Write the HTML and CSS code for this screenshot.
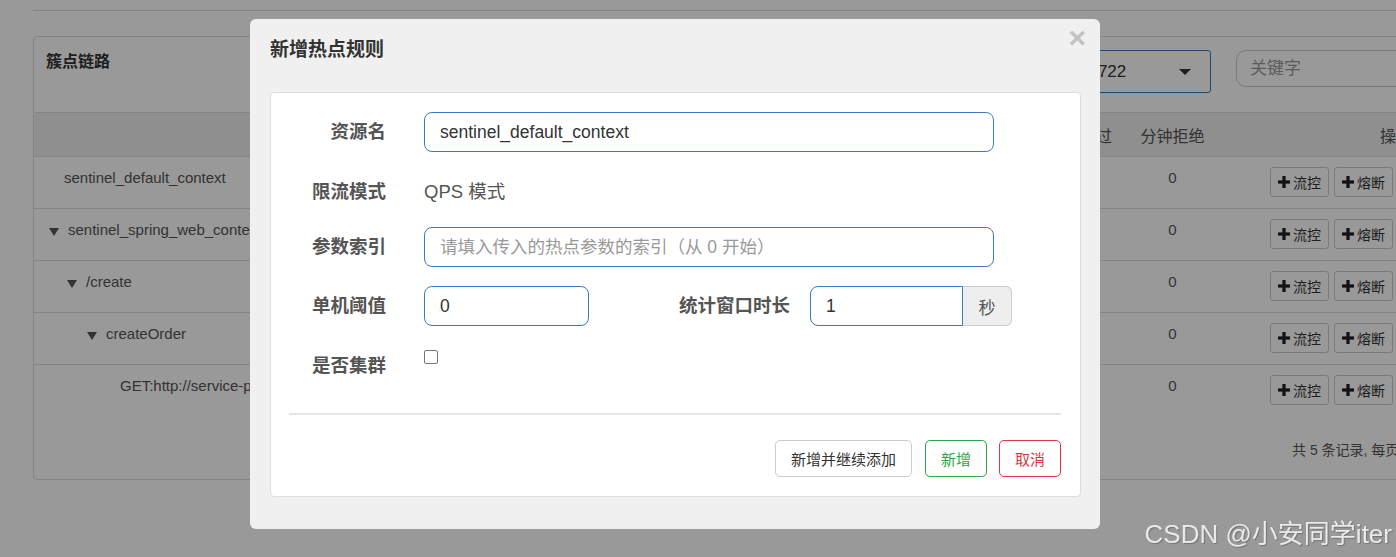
FILE: index.html
```html
<!DOCTYPE html>
<html lang="zh-CN">
<head>
    <meta charset="UTF-8">
    <meta name="viewport" content="width=device-width, initial-scale=1.0">
    <title>簇点链路 - Sentinel 控制台</title>
    <link rel="stylesheet" href="styles.css">
</head>
<body>
    <div class="page">
        <div class="topbar"></div>
        <div class="panel">
            <div class="panel-head">
                <div class="panel-title">簇点链路</div>
                <div class="app-select">
                    <span>192.168.2.105:8722</span>
                    <span class="caret"></span>
                </div>
                <div class="keyword">关键字</div>
            </div>
            <div class="thead">
                <div class="c-name">资源名</div>
                <div class="c-pass">分钟通过</div>
                <div class="c-rej">分钟拒绝</div>
                <div class="c-ops head-ops">操作</div>
            </div>

            <div class="trow">
                <div class="c-name lv0">sentinel_default_context</div>
                <div class="c-pass">0</div>
                <div class="c-rej">0</div>
                <div class="c-ops">
                    <button class="obtn"><svg class="plus" viewBox="0 0 11 11"><rect x="4" y="0" width="3" height="11"/><rect x="0" y="4" width="11" height="3"/></svg>流控</button>
                    <button class="obtn"><svg class="plus" viewBox="0 0 11 11"><rect x="4" y="0" width="3" height="11"/><rect x="0" y="4" width="11" height="3"/></svg>熔断</button>
                </div>
            </div>
            <div class="trow">
                <div class="c-name lv1"><span class="tri"></span>sentinel_spring_web_context</div>
                <div class="c-pass">0</div>
                <div class="c-rej">0</div>
                <div class="c-ops">
                    <button class="obtn"><svg class="plus" viewBox="0 0 11 11"><rect x="4" y="0" width="3" height="11"/><rect x="0" y="4" width="11" height="3"/></svg>流控</button>
                    <button class="obtn"><svg class="plus" viewBox="0 0 11 11"><rect x="4" y="0" width="3" height="11"/><rect x="0" y="4" width="11" height="3"/></svg>熔断</button>
                </div>
            </div>
            <div class="trow">
                <div class="c-name lv2"><span class="tri"></span>/create</div>
                <div class="c-pass">0</div>
                <div class="c-rej">0</div>
                <div class="c-ops">
                    <button class="obtn"><svg class="plus" viewBox="0 0 11 11"><rect x="4" y="0" width="3" height="11"/><rect x="0" y="4" width="11" height="3"/></svg>流控</button>
                    <button class="obtn"><svg class="plus" viewBox="0 0 11 11"><rect x="4" y="0" width="3" height="11"/><rect x="0" y="4" width="11" height="3"/></svg>熔断</button>
                </div>
            </div>
            <div class="trow">
                <div class="c-name lv3"><span class="tri"></span>createOrder</div>
                <div class="c-pass">0</div>
                <div class="c-rej">0</div>
                <div class="c-ops">
                    <button class="obtn"><svg class="plus" viewBox="0 0 11 11"><rect x="4" y="0" width="3" height="11"/><rect x="0" y="4" width="11" height="3"/></svg>流控</button>
                    <button class="obtn"><svg class="plus" viewBox="0 0 11 11"><rect x="4" y="0" width="3" height="11"/><rect x="0" y="4" width="11" height="3"/></svg>熔断</button>
                </div>
            </div>
            <div class="trow last">
                <div class="c-name lv4">GET:http://service-product/product/1</div>
                <div class="c-pass">0</div>
                <div class="c-rej">0</div>
                <div class="c-ops">
                    <button class="obtn"><svg class="plus" viewBox="0 0 11 11"><rect x="4" y="0" width="3" height="11"/><rect x="0" y="4" width="11" height="3"/></svg>流控</button>
                    <button class="obtn"><svg class="plus" viewBox="0 0 11 11"><rect x="4" y="0" width="3" height="11"/><rect x="0" y="4" width="11" height="3"/></svg>熔断</button>
                </div>
            </div>
            <div class="pager">共 5 条记录, 每页 16 条记录</div>
        </div>
    </div>

    <div class="backdrop"></div>

    <div class="modal">
        <div class="modal-title">新增热点规则</div>
        <span class="close">×</span>
        <div class="card">
            <div class="frow r1">
                <label class="lbl">资源名</label>
                <input class="inp wide" type="text" value="sentinel_default_context">
            </div>
            <div class="frow r2">
                <label class="lbl">限流模式</label>
                <span class="plain">QPS 模式</span>
            </div>
            <div class="frow r3">
                <label class="lbl">参数索引</label>
                <input class="inp wide" type="text" placeholder="请填入传入的热点参数的索引（从 0 开始）">
            </div>
            <div class="frow r4">
                <label class="lbl">单机阈值</label>
                <input class="inp small" type="text" value="0">
                <label class="lbl lbl2">统计窗口时长</label>
                <div class="igroup">
                    <input class="inp grp" type="text" value="1">
                    <span class="addon">秒</span>
                </div>
            </div>
            <div class="frow r5">
                <label class="lbl">是否集群</label>
                <input class="chk" type="checkbox">
            </div>
            <div class="sep"></div>
            <div class="actions">
                <button class="btn">新增并继续添加</button>
                <button class="btn btn-ok">新增</button>
                <button class="btn btn-cancel">取消</button>
            </div>
        </div>
    </div>

    <div class="watermark">CSDN @小安同学iter</div>
</body>
</html>
```

FILE: styles.css
```css
* {
    margin: 0;
    padding: 0;
    box-sizing: border-box;
}

body {
    width: 1396px;
    height: 557px;
    overflow: hidden;
    background: #fff;
    color: #333;
    font-family: "Liberation Sans", "Noto Sans CJK SC", sans-serif;
}

/* page under the modal */
.page {
    padding: 10px 0 0 33px;
}

.topbar {
    border-top: 1px solid #ddd;
    margin-bottom: 25px;
}

.panel {
    width: 1500px;
    border: 1px solid #ddd;
    border-radius: 4px;
}

.panel-head {
    height: 76px;
    border-bottom: 1px solid #ddd;
    display: flex;
    align-items: flex-start;
    padding: 13px 0 0 12px;
}

.panel-title {
    width: 916px;
    font-size: 16px;
    font-weight: bold;
    line-height: 24px;
    color: #333;
}

.app-select {
    width: 249px;
    height: 43px;
    border: 1px solid #337ab7;
    border-radius: 3px;
    display: flex;
    align-items: center;
    justify-content: space-between;
    padding: 0 19px 0 12px;
    font-size: 17px;
    color: #333;
}

.caret {
    width: 0;
    height: 0;
    border-left: 6px solid transparent;
    border-right: 6px solid transparent;
    border-top: 6px solid #333;
}

.keyword {
    margin-left: 25px;
    width: 220px;
    height: 37px;
    border: 1px solid #ccc;
    border-radius: 10px;
    padding-left: 13px;
    font-size: 17px;
    line-height: 35px;
    color: #999;
}

.thead {
    display: flex;
    align-items: center;
    height: 44px;
    background: #eee;
    border-bottom: 1px solid #ddd;
    font-size: 16px;
    color: #555;
}

.trow {
    display: flex;
    align-items: flex-start;
    height: 52px;
    border-bottom: 1px solid #ddd;
    padding-top: 11px;
    font-size: 15px;
    line-height: 20px;
    color: #555;
}

.trow.last {
    border-bottom: none;
}

.c-name {
    width: 1001px;
    white-space: nowrap;
    overflow: hidden;
}

.thead .c-name {
    text-align: center;
}

.c-pass {
    width: 90px;
    text-align: center;
}

.c-rej {
    width: 95px;
    text-align: center;
}

.c-ops {
    display: flex;
    gap: 5px;
    padding-left: 50px;
    margin-top: -1px;
}

.head-ops {
    padding-left: 160px;
    margin-top: 0;
}

.lv0 { padding-left: 30px; }
.lv1 { padding-left: 15px; }
.lv2 { padding-left: 33px; }
.lv3 { padding-left: 53px; }
.lv4 { padding-left: 86px; }

.tri {
    display: inline-block;
    width: 0;
    height: 0;
    border-left: 5px solid transparent;
    border-right: 5px solid transparent;
    border-top: 8px solid #555;
    margin-right: 9px;
    vertical-align: -1px;
}

.obtn {
    height: 30px;
    padding: 0 7px;
    border: 1px solid #ccc;
    border-radius: 3px;
    background: #fff;
    color: #333;
    font-size: 14px;
    font-family: inherit;
    display: inline-flex;
    align-items: center;
    gap: 3px;
}

.plus {
    width: 12px;
    height: 12px;
    fill: #222;
}

.pager {
    height: 62px;
    padding: 23px 0 0 1258px;
    font-size: 14px;
    line-height: 20px;
    color: #555;
    white-space: nowrap;
}

.backdrop {
    position: fixed;
    top: 0;
    left: 0;
    right: 0;
    bottom: 0;
    background: rgba(0, 0, 0, 0.4);
}

/* modal */
.modal {
    position: absolute;
    left: 250px;
    top: 19px;
    width: 850px;
    height: 510px;
    background: #f0f0f0;
    border-radius: 6px;
    padding: 19px 19px 0 20px;
}

.modal-title {
    font-size: 19px;
    font-weight: bold;
    line-height: 24px;
    color: #333;
    margin-bottom: 30px;
}

.close {
    position: absolute;
    right: 14px;
    top: 4px;
    font-size: 30px;
    font-weight: bold;
    line-height: 1;
    color: #c2c2c2;
}

.card {
    height: 405px;
    background: #fff;
    border: 1px solid #ddd;
    border-radius: 4px;
    padding: 19px 19px 0 18px;
}

.frow {
    display: flex;
    align-items: center;
    height: 40px;
}

.r1 { margin-bottom: 20px; }
.r2 { margin-bottom: 15px; }
.r3 { margin-bottom: 19px; }
.r4 { margin-bottom: 20px; }

.lbl {
    width: 97px;
    margin-right: 38px;
    flex-shrink: 0;
    text-align: right;
    font-size: 18.5px;
    font-weight: bold;
    line-height: 24px;
    color: #555;
    white-space: nowrap;
}

.lbl2 {
    width: 201px;
    margin-right: 20px;
}

.inp {
    height: 40px;
    border: 1px solid #3a7bbe;
    border-radius: 8px;
    padding: 0 15px;
    font-size: 17.5px;
    font-family: inherit;
    color: #333;
    outline: none;
    background: #fff;
}

.inp::placeholder {
    color: #999;
    font-size: 17.5px;
}

.wide { width: 570px; }
.small { width: 165px; }

.igroup {
    display: flex;
}

.grp {
    width: 153px;
    border-radius: 8px 0 0 8px;
}

.addon {
    width: 49px;
    height: 40px;
    border: 1px solid #ccc;
    border-left: none;
    border-radius: 0 6px 6px 0;
    background: #eee;
    color: #555;
    font-size: 17px;
    display: flex;
    align-items: center;
    justify-content: center;
}

.plain {
    font-size: 18.5px;
    color: #555;
    line-height: 24px;
}

.chk {
    appearance: none;
    -webkit-appearance: none;
    width: 14px;
    height: 14px;
    border: 1px solid #767676;
    border-radius: 2px;
    background: #fff;
    align-self: flex-start;
    margin-top: 4px;
}

.sep {
    height: 2px;
    background: #e5e5e5;
    margin-top: 27px;
}

.actions {
    display: flex;
    justify-content: flex-end;
    gap: 12px;
    margin-top: 25px;
}

.btn {
    height: 37px;
    padding: 0 15px;
    font-size: 15px;
    font-family: inherit;
    border-radius: 5px;
    background: #fff;
    border: 1px solid #ccc;
    color: #333;
}

.btn:first-child {
    margin-right: 1px;
}

.btn-ok {
    border-color: #28a745;
    color: #28a745;
}

.btn-cancel {
    border-color: #dc3545;
    color: #dc3545;
}

.watermark {
    position: absolute;
    right: 4px;
    bottom: 6px;
    font-size: 26px;
    line-height: 34px;
    color: rgba(255, 255, 255, 0.82);
    text-shadow: 1px 1px 1px rgba(0, 0, 0, 0.25);
}
```
